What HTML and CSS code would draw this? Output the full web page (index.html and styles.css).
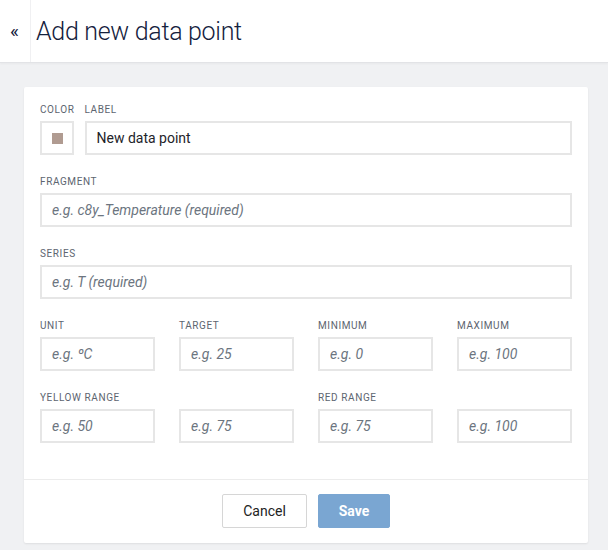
FILE: index.html
```html
<!DOCTYPE html>
<html>
<head>
<meta charset="utf-8">
<link rel="stylesheet" href="styles.css">
</head>
<body>
<header class="topbar">
  <div class="back">«</div>
  <h1 class="title">Add new data point</h1>
</header>
<main class="page">
  <section class="card">
    <div class="form">
      <div class="row-top">
        <div class="field color-field">
          <label class="lbl">Color</label>
          <div class="color-box"><span class="swatch"></span></div>
        </div>
        <div class="field grow">
          <label class="lbl">Label</label>
          <input class="inp" type="text" value="New data point">
        </div>
      </div>
      <div class="field">
        <label class="lbl">Fragment</label>
        <input class="inp" type="text" placeholder="e.g. c8y_Temperature (required)">
      </div>
      <div class="field">
        <label class="lbl">Series</label>
        <input class="inp" type="text" placeholder="e.g. T (required)">
      </div>
      <div class="grid4">
        <div class="field"><label class="lbl">Unit</label><input class="inp" type="text" placeholder="e.g. ºC"></div>
        <div class="field"><label class="lbl">Target</label><input class="inp" type="text" placeholder="e.g. 25"></div>
        <div class="field"><label class="lbl">Minimum</label><input class="inp" type="text" placeholder="e.g. 0"></div>
        <div class="field"><label class="lbl">Maximum</label><input class="inp" type="text" placeholder="e.g. 100"></div>
        <div class="field"><label class="lbl">Yellow range</label><input class="inp" type="text" placeholder="e.g. 50"></div>
        <div class="field"><label class="lbl">&nbsp;</label><input class="inp" type="text" placeholder="e.g. 75"></div>
        <div class="field"><label class="lbl">Red range</label><input class="inp" type="text" placeholder="e.g. 75"></div>
        <div class="field"><label class="lbl">&nbsp;</label><input class="inp" type="text" placeholder="e.g. 100"></div>
      </div>
    </div>
    <footer class="actions">
      <button class="btn btn-cancel" type="button">Cancel</button>
      <button class="btn btn-save" type="button">Save</button>
    </footer>
  </section>
</main>
</body>
</html>
```
FILE: styles.css
```css
* { box-sizing: border-box; }
html, body { margin: 0; padding: 0; }
body {
  background: #f0f1f3;
  font-family: Roboto, "Liberation Sans", sans-serif;
  width: 608px;
  height: 550px;
  overflow: hidden;
}
.topbar {
  height: 63px;
  background: #fff;
  border-bottom: 1px solid #e2e3e6;
  box-shadow: 0 1px 2px rgba(0,0,0,0.04);
  display: flex;
  align-items: stretch;
}
.back {
  width: 31px;
  border-right: 1px solid #f0f0f2;
  display: flex;
  align-items: center;
  justify-content: center;
  font-size: 19px;
  color: #14213d;
  padding-bottom: 2px;
  padding-right: 1px;
}
.title {
  margin: 0;
  padding-left: 5px;
  font-size: 25px;
  font-weight: 300;
  color: #14213d;
  display: flex;
  align-items: center;
  padding-top: 1px;
  letter-spacing: -0.3px;
}
.page {
  padding: 24px 20px 0 24px;
}
.card {
  background: #fff;
  border-radius: 2px;
  box-shadow: 0 1px 2px rgba(0,0,0,0.08);
}
.form {
  padding: 16px 16px 36px 16px;
  display: flex;
  flex-direction: column;
  gap: 20px;
}
.field {
  display: flex;
  flex-direction: column;
  gap: 4px;
  min-width: 0;
}
.grow { flex: 1; }
.row-top {
  display: flex;
  gap: 10px;
}
.lbl {
  font-size: 10px;
  line-height: 14px;
  text-transform: uppercase;
  letter-spacing: 0.6px;
  color: #5d6570;
  white-space: nowrap;
}
.color-box {
  width: 34px;
  height: 34px;
  border: 2px solid #e6e6e6;
  display: flex;
  align-items: center;
  justify-content: center;
}
.swatch {
  width: 11px;
  height: 11px;
  background: #b09b91;
}
.inp {
  display: block;
  width: 100%;
  height: 34px;
  border: 2px solid #e6e6e6;
  border-radius: 0;
  padding: 0 10px;
  font-family: Roboto, "Liberation Sans", sans-serif;
  font-size: 14px;
  color: #1e2329;
  background: #fff;
  outline: none;
}
.row-top .inp { padding-left: 10px; }
.inp::placeholder {
  font-style: italic;
  color: #6c7580;
  opacity: 1;
}
.grid4 {
  display: grid;
  grid-template-columns: repeat(4, 1fr);
  column-gap: 24px;
  row-gap: 20px;
}
.actions {
  border-top: 1px solid #ececec;
  padding: 14px 0 15px;
  display: flex;
  justify-content: center;
  gap: 11px;
}
.btn {
  height: 34px;
  font-family: Roboto, "Liberation Sans", sans-serif;
  font-size: 14px;
  border-radius: 2px;
  cursor: pointer;
}
.btn-cancel {
  width: 85px;
  background: #fff;
  border: 1px solid #d6d6d6;
  color: #222;
}
.btn-save {
  width: 72px;
  background: #7aa6d2;
  border: 1px solid #7aa6d2;
  color: #fff;
  font-weight: 700;
}
```
